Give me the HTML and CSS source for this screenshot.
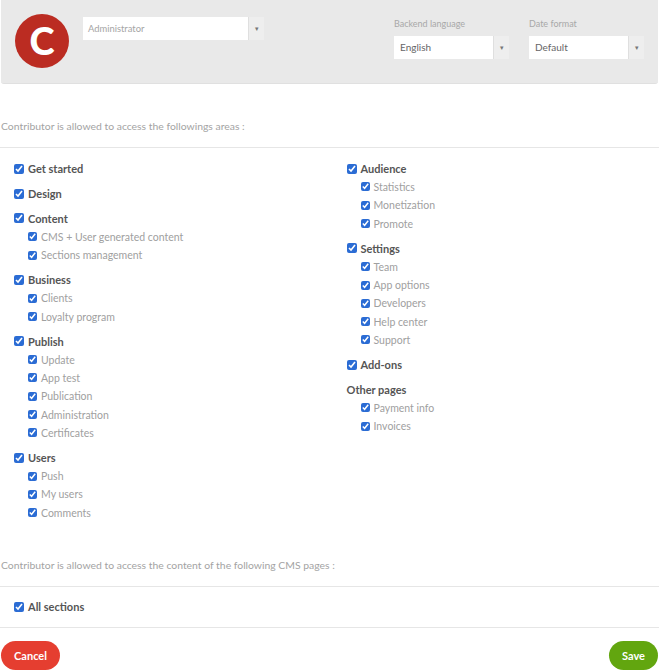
FILE: index.html
```html
<!DOCTYPE html>
<html>
<head>
    <title>Contributor access</title>
    <link rel="stylesheet" href="styles.css">
</head>
<body>
    <div class="top-panel">
        <div class="avatar">C</div>
        <div class="role-select">
            <div class="select select-role">
                <span class="select-value muted">Administrator</span>
                <span class="select-arrow">▾</span>
            </div>
        </div>
        <div class="field field-lang">
            <label>Backend language</label>
            <div class="select">
                <span class="select-value">English</span>
                <span class="select-arrow">▾</span>
            </div>
        </div>
        <div class="field field-date">
            <label>Date format</label>
            <div class="select">
                <span class="select-value">Default</span>
                <span class="select-arrow">▾</span>
            </div>
        </div>
    </div>

    <p class="section-title first">Contributor is allowed to access the followings areas :</p>

    <div class="areas">
        <div class="col col-left">
            <div class="group"><label class="main"><input type="checkbox" checked>Get started</label></div>
            <div class="group"><label class="main"><input type="checkbox" checked>Design</label></div>
            <div class="group">
                <label class="main"><input type="checkbox" checked>Content</label>
                <label class="sub"><input type="checkbox" checked>CMS + User generated content</label>
                <label class="sub"><input type="checkbox" checked>Sections management</label>
            </div>
            <div class="group">
                <label class="main"><input type="checkbox" checked>Business</label>
                <label class="sub"><input type="checkbox" checked>Clients</label>
                <label class="sub"><input type="checkbox" checked>Loyalty program</label>
            </div>
            <div class="group">
                <label class="main"><input type="checkbox" checked>Publish</label>
                <label class="sub"><input type="checkbox" checked>Update</label>
                <label class="sub"><input type="checkbox" checked>App test</label>
                <label class="sub"><input type="checkbox" checked>Publication</label>
                <label class="sub"><input type="checkbox" checked>Administration</label>
                <label class="sub"><input type="checkbox" checked>Certificates</label>
            </div>
            <div class="group">
                <label class="main"><input type="checkbox" checked>Users</label>
                <label class="sub"><input type="checkbox" checked>Push</label>
                <label class="sub"><input type="checkbox" checked>My users</label>
                <label class="sub"><input type="checkbox" checked>Comments</label>
            </div>
        </div>
        <div class="col col-right">
            <div class="group">
                <label class="main"><input type="checkbox" checked>Audience</label>
                <label class="sub"><input type="checkbox" checked>Statistics</label>
                <label class="sub"><input type="checkbox" checked>Monetization</label>
                <label class="sub"><input type="checkbox" checked>Promote</label>
            </div>
            <div class="group">
                <label class="main"><input type="checkbox" checked>Settings</label>
                <label class="sub"><input type="checkbox" checked>Team</label>
                <label class="sub"><input type="checkbox" checked>App options</label>
                <label class="sub"><input type="checkbox" checked>Developers</label>
                <label class="sub"><input type="checkbox" checked>Help center</label>
                <label class="sub"><input type="checkbox" checked>Support</label>
            </div>
            <div class="group"><label class="main"><input type="checkbox" checked>Add-ons</label></div>
            <div class="group">
                <div class="main plain">Other pages</div>
                <label class="sub"><input type="checkbox" checked>Payment info</label>
                <label class="sub"><input type="checkbox" checked>Invoices</label>
            </div>
        </div>
    </div>

    <p class="section-title second">Contributor is allowed to access the content of the following CMS pages :</p>

    <div class="cms-row">
        <label class="main"><input type="checkbox" checked>All sections</label>
    </div>

    <div class="actions">
        <button class="btn btn-cancel">Cancel</button>
        <button class="btn btn-save">Save</button>
    </div>
</body>
</html>
```

FILE: styles.css
```css
* {
    box-sizing: border-box;
}
html, body {
    margin: 0;
    height: 671px;
    overflow: hidden;
}
body {
    font-family: Lato, "Open Sans", sans-serif;
    font-size: 11px;
    color: #555;
    background: #fff;
}
.top-panel {
    display: flex;
    align-items: flex-start;
    height: 84px;
    margin: 0 1px;
    padding: 14px 14px 0 14px;
    background: #e9e9e9;
    border-bottom: 1px solid #e0e0e0;
    border-radius: 0 0 3px 3px;
}
.avatar {
    width: 54px;
    height: 54px;
    margin-right: 14px;
    border-radius: 50%;
    background: #bb2c22;
    color: #fff;
    font-size: 38px;
    font-weight: 900;
    line-height: 52px;
    text-align: center;
}
.role-select {
    flex: 1;
    padding-top: 3px;
}
.select {
    display: flex;
    width: 115px;
    height: 23px;
    background: #fff;
}
.select-role {
    width: 181px;
}
.select-value {
    flex: 1;
    padding-left: 6px;
    font-size: 10px;
    line-height: 23px;
    color: #666;
}
.select-value.muted {
    padding-left: 5px;
    font-size: 9.4px;
    color: #a5a5a5;
}
.select-arrow {
    width: 16px;
    background: #eeeeee;
    border-left: 1px solid #dfdfdf;
    color: #777;
    font-size: 7px;
    line-height: 23px;
    text-align: center;
}
.field label {
    display: block;
    height: 22px;
    padding-top: 4px;
    font-size: 9px;
    color: #a8a8a8;
}
.field-lang {
    margin-right: 20px;
}
.section-title {
    margin: 0;
    padding: 0 0 14px 1px;
    font-size: 10.4px;
    line-height: 14px;
    color: #a3a3a3;
    border-bottom: 1px solid #e6e6e6;
}
.section-title.first {
    margin-top: 35px;
}
.areas {
    display: flex;
    height: 410px;
    padding-top: 11.5px;
}
.col-left {
    width: 346.5px;
    padding-left: 14px;
}
.group {
    margin-bottom: 6.6px;
}
.main, .sub {
    display: flex;
    align-items: center;
    height: 18.3px;
}
.main {
    font-size: 11px;
    font-weight: 700;
    color: #555;
}
.sub {
    padding-left: 14px;
    font-size: 10.5px;
    color: #a0a0a0;
}
input[type="checkbox"] {
    width: 10px;
    height: 10px;
    margin: 0 4px 0 0;
    accent-color: #2b6cd4;
}
.sub input[type="checkbox"] {
    width: 9px;
    height: 9px;
}
.cms-row {
    display: flex;
    align-items: center;
    height: 41px;
    padding-left: 14px;
    border-bottom: 1px solid #e6e6e6;
}
.actions {
    display: flex;
    justify-content: space-between;
    padding: 13px 1px 0;
}
.btn {
    height: 29px;
    border: none;
    border-radius: 15px;
    color: #fff;
    font-family: inherit;
    font-size: 11px;
    font-weight: 700;
    cursor: pointer;
}
.btn-cancel {
    width: 59px;
    background: #e53e30;
}
.btn-save {
    width: 49px;
    background: #62a60f;
}
```
